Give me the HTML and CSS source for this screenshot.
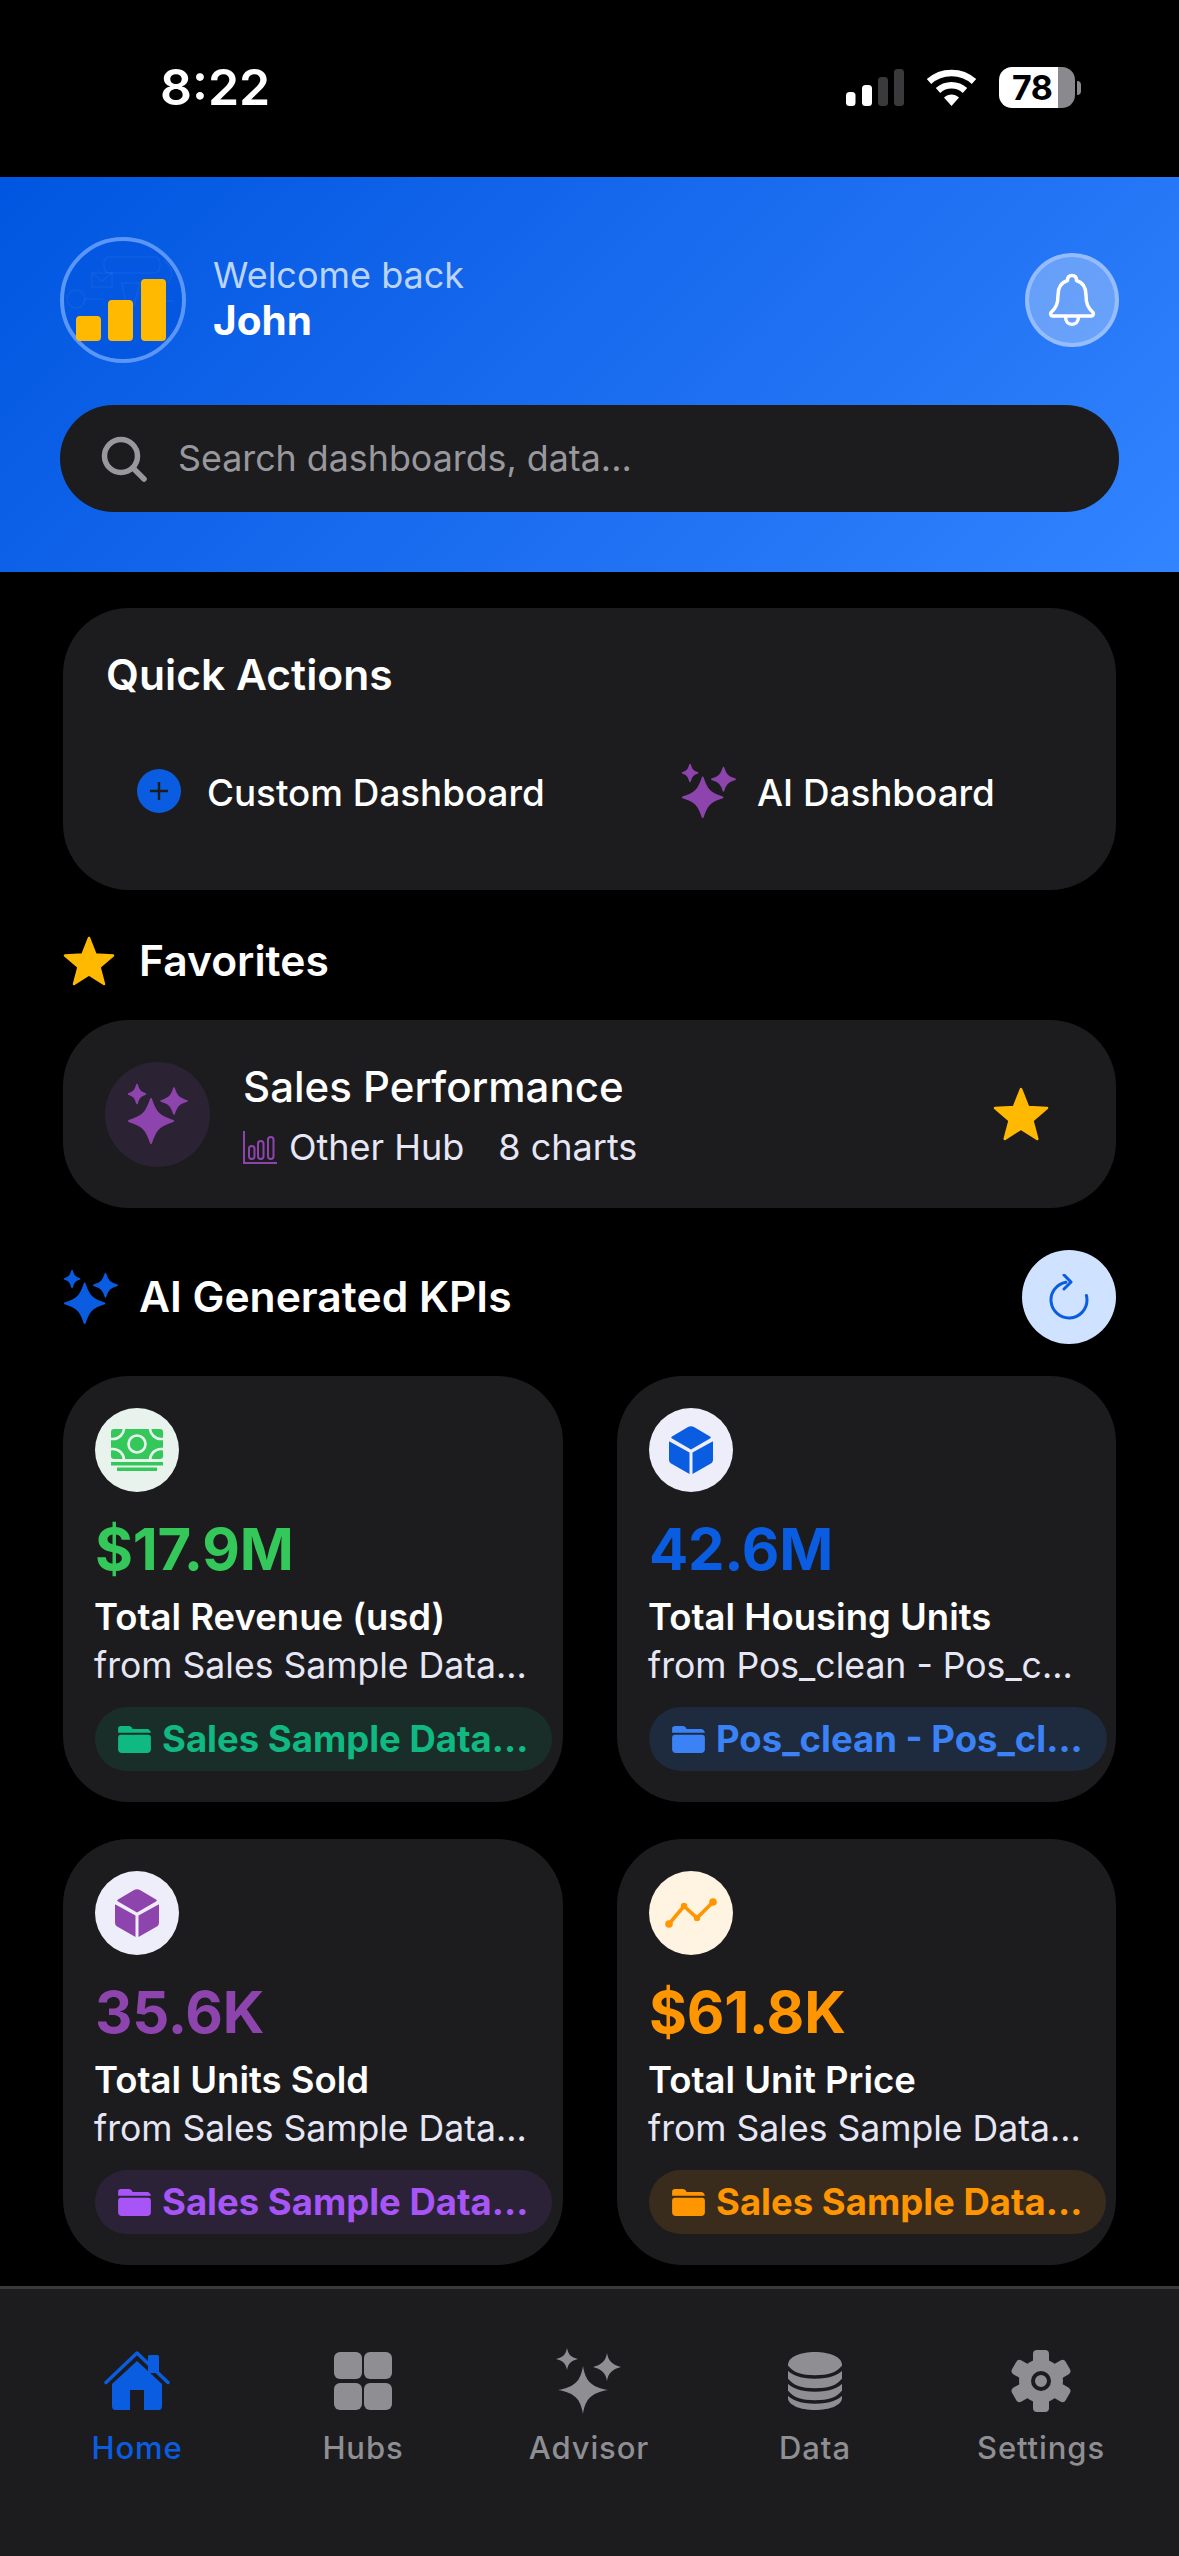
FILE: index.html
```html
<!DOCTYPE html>
<html lang="en">
<head>
<meta charset="utf-8">
<title>Home</title>
<link rel="stylesheet" href="styles.css">
</head>
<body>
<svg class="defs" width="0" height="0" aria-hidden="true">
  <symbol id="sparkles" viewBox="0 0 60 62">
    <path d="M23 16C27.500 30 31 33.500 45 38C31 42.500 27.500 46 23 60C18.500 46 15 42.500 1 38C15 33.500 18.500 30 23 16Z" stroke="currentColor" stroke-width="2" stroke-linejoin="round"/>
    <path d="M9 1.500C10.800 7.500 12 9 17.500 11C12 13 10.800 14.500 9 20.500C7.200 14.500 6 13 .5 11C6 9 7.200 7.500 9 1.500Z" stroke="currentColor" stroke-width="1.500" stroke-linejoin="round"/>
    <path d="M46 5C48.800 13.500 50.500 15.200 59 18C50.500 20.800 48.800 22.500 46 31C43.200 22.500 41.500 20.800 33 18C41.500 15.200 43.200 13.500 46 5Z" stroke="currentColor" stroke-width="1.500" stroke-linejoin="round"/>
  </symbol>
  <symbol id="star" viewBox="0 0 52 50">
    <path d="M26 2L32.500 18.500L50 19.500L36.500 31L41 48L26 38.500L11 48L15.500 31L2 19.500L19.500 18.500Z" stroke="currentColor" stroke-width="2.500" stroke-linejoin="round"/>
  </symbol>
  <symbol id="folder" viewBox="0 0 34 28">
    <path d="M3 0H11C13 0 14 1 15 3H30C32 3 34 5 34 7H0V3C0 1 1 0 3 0Z"/>
    <path d="M3 9H31C33 9 34 10 34 12V24C34 26.500 32.500 28 30 28H4C1.500 28 0 26.500 0 24V12C0 10 1 9 3 9Z"/>
  </symbol>
  <symbol id="cube" viewBox="0 0 44 48">
    <path d="M19 1C21 0 23 0 25 1L41 10.500C42 11 42 12 41 12.500L22 23.500L3 12.500C2 12 2 11 3 10.500Z"/>
    <path d="M0.500 15.500L20.500 26.500V48L3 38C1 37 0 35.500 0 33.500V16C0 15.600 .2 15.400 .5 15.500Z"/>
    <path d="M43.500 15.500L23.500 26.500V48L41 38C43 37 44 35.500 44 33.500V16C44 15.600 43.800 15.400 43.500 15.500Z"/>
  </symbol>
</svg>

<div class="phone">
  <div class="status">
    <span class="clock">8:22</span>
    <div class="status-icons">
      <svg class="signal" width="58" height="37" viewBox="0 0 58 37">
        <rect x="0" y="23" width="9.500" height="14" rx="3.500" fill="#fff"/>
        <rect x="16" y="16" width="10" height="21" rx="3.500" fill="#fff"/>
        <rect x="32" y="8" width="10" height="29" rx="3.500" fill="#3a3a3c"/>
        <rect x="48" y="0" width="10" height="37" rx="3.500" fill="#3a3a3c"/>
      </svg>
      <svg class="wifi" width="51" height="37" viewBox="0 0 51 37">
        <path d="M3 12.500C15.500 1 35.500 1 48 12.500" fill="none" stroke="#fff" stroke-width="6.500" stroke-linecap="butt"/>
        <path d="M12 21.500C19.500 14.500 31.500 14.500 39 21.500" fill="none" stroke="#fff" stroke-width="6.500"/>
        <path d="M18 28.500C22.500 24.500 28.500 24.500 33 28.500L25.500 37Z" fill="#fff"/>
      </svg>
      <div class="battery"><span class="battery-level">78</span></div>
      <span class="battery-tip"></span>
    </div>
  </div>

  <header class="hero">
    <div class="hero-top">
      <div class="avatar">
        <svg width="118" height="118" viewBox="0 0 118 118">
          <g class="doodle">
            <rect x="40" y="16" width="56" height="16" rx="6"/>
            <rect x="28" y="32" width="20" height="14"/>
            <path d="M28 32L38 40L48 32"/>
            <circle cx="12" cy="58" r="9"/>
            <path d="M21 58H40M58 42L76 42L70 64H62ZM100 20C108 24 110 34 104 42M90 60L110 60"/>
            <circle cx="48" cy="96" r="3"/>
          </g>
          <rect x="12" y="75" width="25" height="25" rx="4" fill="#ffb900"/>
          <rect x="44" y="59" width="25" height="41" rx="4" fill="#ffb900"/>
          <rect x="77" y="38" width="25" height="62" rx="4" fill="#ffb900"/>
        </svg>
      </div>
      <div class="welcome">
        <span class="welcome-line">Welcome back</span>
        <span class="welcome-name">John</span>
      </div>
      <button class="bell" type="button" aria-label="Notifications">
        <svg width="48" height="54" viewBox="0 0 48 54" fill="none" stroke="#fff" stroke-width="3.500" stroke-linejoin="round" stroke-linecap="round">
          <path d="M24 2.500C27 2.500 28.500 4.500 28.500 7.500C35 9.500 38 15 38 22C38 31 40 35 45 39.500C46 41 45 43 43.500 43H4.500C3 43 2 41 3 39.500C8 35 10 31 10 22C10 15 13 9.500 19.500 7.500C19.500 4.500 21 2.500 24 2.500Z"/>
          <path d="M17.500 43.500C17.500 48 20 51.500 24 51.500C28 51.500 30.500 48 30.500 43.500"/>
        </svg>
      </button>
    </div>
    <div class="search">
      <svg width="46" height="46" viewBox="0 0 46 46" fill="none" stroke="#98989d" stroke-width="5.500" stroke-linecap="round">
        <circle cx="20" cy="20" r="16.500"/>
        <path d="M32 32L43 43"/>
      </svg>
      <span class="search-text">Search dashboards, data...</span>
    </div>
  </header>

  <main class="content">
    <section class="card quick">
      <h2 class="section-title">Quick Actions</h2>
      <div class="quick-row">
        <div class="quick-item">
          <span class="plus">
            <svg width="20" height="20" viewBox="0 0 20 20" stroke="#1c1c1e" stroke-width="2.400"><path d="M10 1V19M1 10H19"/></svg>
          </span>
          <span class="quick-label gap-plus">Custom Dashboard</span>
        </div>
        <div class="quick-item">
          <svg class="purple" width="56" height="56"><use href="#sparkles"/></svg>
          <span class="quick-label gap-ai">AI Dashboard</span>
        </div>
      </div>
    </section>

    <div class="head-row fav-head">
      <svg class="gold" width="52" height="50"><use href="#star"/></svg>
      <h2 class="section-title">Favorites</h2>
    </div>

    <section class="card favorite">
      <div class="fav-icon">
        <svg class="purple" width="60" height="62"><use href="#sparkles"/></svg>
      </div>
      <div class="fav-text">
        <span class="fav-title">Sales Performance</span>
        <div class="fav-sub">
          <svg class="chart-mini" width="34" height="33" viewBox="0 0 34 33" fill="none" stroke="#8e44ad" stroke-width="2">
            <path d="M1 0V32H34"/>
            <rect x="6" y="15" width="5.500" height="13" rx="2.700"/>
            <rect x="15" y="10" width="5.500" height="18" rx="2.700"/>
            <rect x="25" y="6" width="5.500" height="22" rx="2.700"/>
          </svg>
          <span>Other Hub</span>
          <span class="fav-count">8 charts</span>
        </div>
      </div>
      <svg class="gold fav-star" width="58" height="54"><use href="#star"/></svg>
    </section>

    <div class="head-row kpi-head">
      <svg class="blue" width="56" height="56"><use href="#sparkles"/></svg>
      <h2 class="section-title">AI Generated KPIs</h2>
      <button class="refresh" type="button" aria-label="Refresh">
        <svg width="40" height="46" viewBox="0 0 40 46" fill="none" stroke="#0a5ce0" stroke-width="3" stroke-linecap="round" stroke-linejoin="round">
          <path d="M17 8.200A18 18 0 1 0 38 26C38 24.500 37.800 23 37.400 21.500"/>
          <path d="M15 1L22 8L15 15"/>
        </svg>
      </button>
    </div>

    <div class="kpis">
      <article class="card kpi green">
        <div class="kpi-icon bg-green">
          <svg width="52" height="42" viewBox="0 0 52 42">
            <rect x="0" y="0" width="52" height="30" rx="3" fill="#34c759"/>
            <g fill="none" stroke="#e9f3ee" stroke-width="2.600">
              <circle cx="26" cy="15" r="8.500"/>
              <circle cx="2" cy="-1" r="11"/>
              <circle cx="50" cy="-1" r="11"/>
              <circle cx="2" cy="31" r="11"/>
              <circle cx="50" cy="31" r="11"/>
            </g>
            <rect x="0" y="33" width="52" height="3.500" fill="#34c759"/>
            <rect x="6" y="38.500" width="40" height="3.500" fill="#34c759"/>
          </svg>
        </div>
        <span class="kpi-value">$17.9M</span>
        <span class="kpi-title">Total Revenue (usd)</span>
        <span class="kpi-from">from Sales Sample Data...</span>
        <span class="pill pill-green"><svg width="33" height="27"><use href="#folder"/></svg><span>Sales Sample Data...</span></span>
      </article>

      <article class="card kpi blue">
        <div class="kpi-icon bg-lilac">
          <svg width="44" height="48"><use href="#cube"/></svg>
        </div>
        <span class="kpi-value">42.6M</span>
        <span class="kpi-title">Total Housing Units</span>
        <span class="kpi-from">from Pos_clean - Pos_c...</span>
        <span class="pill pill-blue"><svg width="33" height="27"><use href="#folder"/></svg><span>Pos_clean - Pos_cl...</span></span>
      </article>

      <article class="card kpi purple">
        <div class="kpi-icon bg-lilac">
          <svg width="44" height="48"><use href="#cube"/></svg>
        </div>
        <span class="kpi-value">35.6K</span>
        <span class="kpi-title">Total Units Sold</span>
        <span class="kpi-from">from Sales Sample Data...</span>
        <span class="pill pill-purple"><svg width="33" height="27"><use href="#folder"/></svg><span>Sales Sample Data...</span></span>
      </article>

      <article class="card kpi orange">
        <div class="kpi-icon bg-cream">
          <svg width="52" height="30" viewBox="0 0 52 30" fill="none" stroke="#ff9500" stroke-width="3.600">
            <path d="M4 26L19 8L32 20L48 4"/>
            <g fill="#ff9500" stroke="none">
              <circle cx="4" cy="26" r="3.800"/>
              <circle cx="19" cy="8" r="3.200"/>
              <circle cx="32" cy="20" r="3.200"/>
              <circle cx="48" cy="4" r="3.800"/>
            </g>
          </svg>
        </div>
        <span class="kpi-value">$61.8K</span>
        <span class="kpi-title">Total Unit Price</span>
        <span class="kpi-from">from Sales Sample Data...</span>
        <span class="pill pill-orange"><svg width="33" height="27"><use href="#folder"/></svg><span>Sales Sample Data...</span></span>
      </article>
    </div>
  </main>

  <nav class="tabbar">
    <div class="tab active">
      <svg width="66" height="66" viewBox="0 0 66 66">
        <path d="M2 34.500L33 5L64 34.500" fill="none" stroke="currentColor" stroke-width="3.500" stroke-linecap="round" stroke-linejoin="round"/>
        <rect x="44" y="7" width="11" height="18" rx="1.500" fill="currentColor"/>
        <path d="M33 13L58 36V58C58 61 56.500 62 54.500 62H40V42H26V62H11.500C9.500 62 8 61 8 58V36Z" fill="currentColor"/>
      </svg>
      <span class="tab-label">Home</span>
    </div>
    <div class="tab">
      <svg width="66" height="66" viewBox="0 0 66 66" fill="currentColor">
        <rect x="4" y="4" width="28" height="27" rx="6"/>
        <rect x="34" y="4" width="28" height="27" rx="6"/>
        <rect x="4" y="35" width="28" height="27" rx="6"/>
        <rect x="34" y="35" width="28" height="27" rx="6"/>
      </svg>
      <span class="tab-label">Hubs</span>
    </div>
    <div class="tab">
      <svg width="66" height="66" viewBox="0 0 66 66" fill="currentColor">
        <path d="M27 18C29.500 33 35 39 52 42C35 45 29.500 51 27 66C24.500 51 19 45 2 42C19 39 24.500 33 27 18Z"/>
        <path d="M11 0C12.300 6.500 15 9.500 22 11C15 12.500 12.300 15.500 11 22C9.700 15.500 7 12.500 0 11C7 9.500 9.700 6.500 11 0Z"/>
        <path d="M51 5C52.300 13 56 16.500 65 19C56 21.500 52.300 25 51 33C49.700 25 46 21.500 37 19C46 16.500 49.700 13 51 5Z"/>
      </svg>
      <span class="tab-label">Advisor</span>
    </div>
    <div class="tab">
      <svg width="66" height="66" viewBox="0 0 66 66">
        <path d="M6 17C6 9 18 4 33 4C48 4 60 9 60 17V50C60 57 48 62 33 62C18 62 6 57 6 50Z" fill="currentColor"/>
        <g fill="none" stroke="#1c1c1e" stroke-width="3.600">
          <path d="M5 19C10 26 21 29 33 29C45 29 56 26 61 19"/>
          <path d="M5 32C10 39 21 42 33 42C45 42 56 39 61 32"/>
          <path d="M5 44C10 51 21 54 33 54C45 54 56 51 61 44"/>
        </g>
      </svg>
      <span class="tab-label">Data</span>
    </div>
    <div class="tab">
      <svg width="66" height="66" viewBox="0 0 66 66">
        <g fill="currentColor">
          <circle cx="33" cy="33" r="22"/>
          <rect x="25" y="2" width="16" height="62" rx="4"/>
          <rect x="25" y="2" width="16" height="62" rx="4" transform="rotate(60 33 33)"/>
          <rect x="25" y="2" width="16" height="62" rx="4" transform="rotate(120 33 33)"/>
        </g>
        <circle cx="33" cy="33" r="8" fill="currentColor" stroke="#1c1c1e" stroke-width="4"/>
      </svg>
      <span class="tab-label">Settings</span>
    </div>
  </nav>
</div>
</body>
</html>
```
FILE: styles.css
```css
* { box-sizing: border-box; }
html, body { margin: 0; padding: 0; background: #000; }
body { font-family: Inter, "Noto Sans", sans-serif; color: #fff; }
.defs { position: absolute; }
.phone { width: 1179px; height: 2556px; display: flex; flex-direction: column; overflow: hidden; background: #000; }

.status { height: 177px; flex: none; display: flex; justify-content: space-between; padding: 67px 98px 0 160px; }
.clock { font-size: 50px; font-weight: 600; line-height: 41px; }
.status-icons { display: flex; align-items: flex-start; padding-top: 2px; }
.signal { margin-right: 22px; }
.wifi { margin-right: 22px; }
.battery { width: 76px; height: 41px; margin-top: -2px; border-radius: 13px; background: linear-gradient(90deg, #fff 0 59px, #8a8a8e 59px); display: flex; align-items: center; padding-left: 13px; }
.battery-level { color: #000; font-size: 34px; font-weight: 700; line-height: 41px; letter-spacing: -.5px; }
.battery-tip { width: 4px; height: 14px; margin: 12px 0 0 2px; border-radius: 0 7px 7px 0; background: #8a8a8e; }

.hero { height: 395px; flex: none; padding: 60px; background: linear-gradient(135deg, #0056e0 0%, #1f70f2 60%, #3384ff 100%); display: flex; flex-direction: column; gap: 42px; }
.hero-top { display: flex; align-items: center; height: 126px; }
.avatar { width: 126px; height: 126px; flex: none; border-radius: 50%; border: 4px solid #5a96f7; background: #0457e0; display: flex; }
.doodle { fill: none; stroke: rgba(255,255,255,.05); stroke-width: 1.500; }
.welcome { display: flex; flex-direction: column; margin-left: 27px; flex: 1; padding-bottom: 4px; }
.welcome-line { font-size: 36px; line-height: 46px; color: #bcd4fb; }
.welcome-name { font-size: 40.500px; line-height: 46px; font-weight: 700; }
.bell { width: 94px; height: 94px; padding: 0; border-radius: 50%; border: 4px solid rgba(255,255,255,.3); background: rgba(255,255,255,.3); display: flex; align-items: center; justify-content: center; }
.search { height: 107px; flex: none; border-radius: 54px; background: #1c1c1e; display: flex; align-items: center; padding-left: 41px; gap: 31px; }
.search-text { font-size: 35.800px; color: #98989d; padding-bottom: 2px; }

.content { flex: 1; min-height: 0; padding: 36px 63px 0 63px; }
.card { background: #1c1c1e; }
.section-title { margin: 0; font-size: 42.600px; line-height: 54px; font-weight: 600; }

.quick { height: 282px; border-radius: 66px; padding: 40px 43px 0; }
.quick-row { display: grid; grid-template-columns: 544px 1fr; margin-top: 59px; padding-left: 31px; height: 60px; }
.quick-item { display: flex; align-items: center; }
.quick-label { font-size: 36.800px; font-weight: 500; padding-top: 2px; }
.gap-plus { margin-left: 26px; }
.gap-ai { margin-left: 20px; }
.plus { width: 44px; height: 44px; border-radius: 50%; background: #0a5ce0; display: flex; align-items: center; justify-content: center; }
.purple { color: #8e44ad; fill: #8e44ad; }
.gold { color: #ffb900; fill: #ffb900; }
.blue { color: #0a5ce0; fill: #0a5ce0; }
.green { color: #34c759; }
.orange { color: #ff9500; }

.head-row { display: flex; align-items: center; }
.fav-head { margin-top: 44px; gap: 24px; height: 54px; }
.favorite { margin-top: 32px; height: 188px; border-radius: 66px; display: flex; align-items: center; padding: 0 66px 0 42px; }
.fav-icon { width: 105px; height: 105px; flex: none; border-radius: 50%; background: #2b2233; display: flex; align-items: center; justify-content: center; }
.fav-text { flex: 1; display: flex; flex-direction: column; gap: 13px; margin: 3px 0 0 33px; }
.fav-title { font-size: 42px; line-height: 50px; font-weight: 500; }
.fav-sub { font-size: 36px; line-height: 44px; color: #e6e6f5; display: flex; align-items: center; }
.chart-mini { margin-right: 12px; }
.fav-count { margin-left: 34px; }
.fav-star { flex: none; }

.kpi-head { margin-top: 42px; height: 94px; gap: 20px; }
.refresh { width: 94px; height: 94px; margin-left: auto; padding: 0; border: 0; border-radius: 50%; background: #cfe2ff; display: flex; align-items: center; justify-content: center; }

.kpis { margin-top: 32px; display: grid; grid-template-columns: 500px 499px; justify-content: space-between; row-gap: 37px; }
.kpi { height: 426px; border-radius: 66px; padding: 32px 0 0 32px; display: flex; flex-direction: column; align-items: flex-start; }
.kpi-icon { width: 84px; height: 84px; flex: none; border-radius: 50%; display: flex; align-items: center; justify-content: center; }
.bg-green { background: #e9f3ee; }
.bg-lilac { background: #eeeefb; }
.bg-cream { background: #fff3e2; }
.kpi-value { margin-top: 22px; font-size: 58px; line-height: 70px; font-weight: 700; letter-spacing: -.2px; }
.kpi-title { margin-top: 11px; margin-left: -1px; font-size: 36.500px; line-height: 44px; font-weight: 600; color: #fff; }
.kpi-from { margin-top: 6px; margin-left: -1px; font-size: 35.600px; line-height: 42px; color: #e6e6f5; white-space: nowrap; }
.pill { margin-top: 20px; height: 64px; border-radius: 32px; display: flex; align-items: center; gap: 11px; padding: 0 24px 0 23px; font-size: 36.500px; font-weight: 700; white-space: nowrap; fill: currentColor; }
.pill-green { background: #1a2e29; color: #10b981; }
.pill-blue { background: #1e2a3e; color: #3b82f6; }
.pill-purple { background: #2c2238; color: #a855f7; }
.pill-orange { background: #3a2c1d; color: #ff9500; }

.tabbar { height: 270px; flex: none; background: #1c1c1e; border-top: 3px solid #3a3a3c; display: grid; grid-template-columns: repeat(5, 226px); padding: 59px 24px 0; }
.tab { display: flex; flex-direction: column; align-items: center; color: #8e8e93; }
.tab.active { color: #0a5ce0; }
.tab-label { margin-top: 14px; font-size: 31px; line-height: 40px; font-weight: 500; letter-spacing: .9px; }
```
